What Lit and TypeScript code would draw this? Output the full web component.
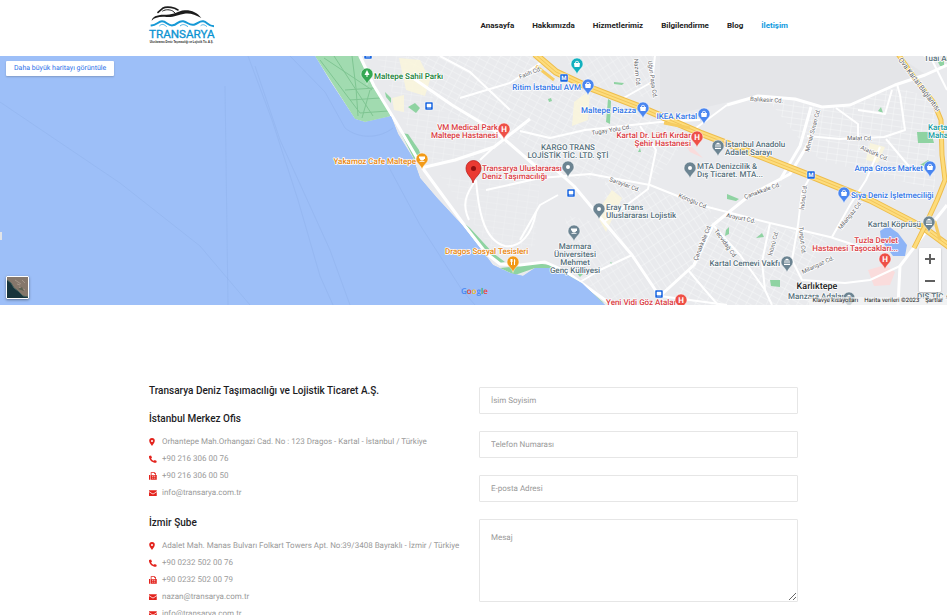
import { LitElement, html, svg, css } from "lit";
import { customElement } from "lit/decorators.js";

type Kind = "park" | "shop" | "food" | "health" | "place" | "teal";
type Anchor = "start" | "middle" | "end";

interface Label {
  x: number;
  y: number;
  lines: string[];
  kind: Kind | "town";
  anchor: Anchor;
}

const LABELS: Label[] = [
  { x: 374, y: 79, lines: ["Maltepe Sahil Parkı"], kind: "park", anchor: "start" },
  { x: 581, y: 90, lines: ["Ritim İstanbul AVM"], kind: "shop", anchor: "end" },
  { x: 636, y: 113, lines: ["Maltepe Piazza"], kind: "shop", anchor: "end" },
  { x: 697, y: 119, lines: ["IKEA Kartal"], kind: "shop", anchor: "end" },
  { x: 498, y: 130, lines: ["VM Medical Park", "Maltepe Hastanesi"], kind: "health", anchor: "end" },
  { x: 691, y: 138, lines: ["Kartal Dr. Lütfi Kırdar", "Şehir Hastanesi"], kind: "health", anchor: "end" },
  { x: 725, y: 147, lines: ["İstanbul Anadolu", "Adalet Sarayı"], kind: "place", anchor: "start" },
  { x: 568, y: 150, lines: ["KARGO TRANS", "LOJİSTİK TİC. LTD. ŞTİ"], kind: "place", anchor: "middle" },
  { x: 697, y: 169, lines: ["MTA Denizcilik &", "Dış Ticaret. MTA..."], kind: "place", anchor: "start" },
  { x: 416, y: 164, lines: ["Yakamoz Cafe Maltepe"], kind: "food", anchor: "end" },
  { x: 482, y: 171, lines: ["Transarya Uluslararası", "Deniz Taşımacılığı"], kind: "health", anchor: "start" },
  { x: 923, y: 171, lines: ["Anpa Gross Market"], kind: "shop", anchor: "end" },
  { x: 851, y: 198, lines: ["Siya Deniz İşletmeciliği"], kind: "shop", anchor: "start" },
  { x: 606, y: 210, lines: ["Eray Trans", "Uluslararası Lojistik"], kind: "place", anchor: "start" },
  { x: 921, y: 227, lines: ["Kartal Köprüsü"], kind: "place", anchor: "end" },
  { x: 898, y: 243, lines: ["Tuzla Devlet", "Hastanesi Taşocakları..."], kind: "health", anchor: "end" },
  { x: 575, y: 249, lines: ["Marmara", "Üniversitesi", "Mehmet", "Genç Külliyesi"], kind: "place", anchor: "middle" },
  { x: 445, y: 254, lines: ["Dragos Sosyal Tesisleri"], kind: "food", anchor: "start" },
  { x: 780, y: 266, lines: ["Kartal Cemevi Vakfı"], kind: "place", anchor: "end" },
  { x: 817, y: 289, lines: ["Karlıktepe"], kind: "town", anchor: "middle" },
  { x: 788, y: 299, lines: ["Manzara Adalar"], kind: "place", anchor: "start" },
  { x: 606, y: 305, lines: ["Yeni Vidi Göz Atalar"], kind: "health", anchor: "start" },
  { x: 924, y: 61, lines: ["Tuai Am"], kind: "place", anchor: "start" },
  { x: 928, y: 130, lines: ["Kartal", "Mahal"], kind: "teal", anchor: "start" },
  { x: 917, y: 299, lines: ["DIŞ TİC A"], kind: "place", anchor: "start" },
];

interface Pin {
  x: number;
  y: number;
  kind: Kind;
  glyph: "dot" | "H" | "bag" | "cup" | "fork" | "tree" | "bank";
}

const PINS: Pin[] = [
  { x: 367, y: 74, kind: "park", glyph: "tree" },
  { x: 577, y: 64, kind: "teal", glyph: "bag" },
  { x: 588, y: 85, kind: "shop", glyph: "bag" },
  { x: 643, y: 108, kind: "shop", glyph: "bag" },
  { x: 704, y: 114, kind: "shop", glyph: "bag" },
  { x: 504, y: 129, kind: "health", glyph: "H" },
  { x: 697, y: 137, kind: "health", glyph: "H" },
  { x: 718, y: 146, kind: "place", glyph: "bank" },
  { x: 568, y: 167, kind: "place", glyph: "dot" },
  { x: 690, y: 168, kind: "place", glyph: "dot" },
  { x: 422, y: 159, kind: "food", glyph: "cup" },
  { x: 930, y: 167, kind: "shop", glyph: "bag" },
  { x: 844, y: 193, kind: "shop", glyph: "bag" },
  { x: 599, y: 209, kind: "place", glyph: "dot" },
  { x: 929, y: 222, kind: "place", glyph: "bank" },
  { x: 574, y: 231, kind: "place", glyph: "cup" },
  { x: 885, y: 259, kind: "health", glyph: "H" },
  { x: 513, y: 262, kind: "food", glyph: "fork" },
  { x: 787, y: 262, kind: "place", glyph: "bank" },
  { x: 681, y: 300, kind: "health", glyph: "H" },
  { x: 849, y: 298, kind: "place", glyph: "bank" },
];

const STREETS: [number, number, number, string][] = [
  [520, 79, -22, "Fatih Cd."],
  [592, 135, -9, "Tugay Yolu Cd."],
  [609, 181, 20, "Saraylar Cd."],
  [678, 197, 23, "Köroğlu Cd."],
  [697, 261, -68, "Çanakkale Cd."],
  [714, 231, 54, "Tecvidağ Cd."],
  [726, 217, 12, "Arayurt Cd."],
  [745, 199, -20, "Çanakkale Cd."],
  [750, 101, 3, "Balıkesir Cd."],
  [809, 152, -75, "Mimar Sinan Cd."],
  [847, 140, 1, "Malat Cd."],
  [860, 149, 24, "Atatürk Cd."],
  [841, 230, -52, "Milangaz Cd."],
  [803, 274, -25, "Milangaz Cd."],
  [804, 210, -83, "İnönü Cd."],
  [799, 227, 84, "Turgut Cd."],
  [772, 256, -75, "İnönü Cd."],
  [634, 59, 85, "Nazım Cd."],
  [648, 61, 82, "Uğur Paşa Cd."],
];

const STOPS: [number, number, string][] = [
  [368, 55, "▫"],
  [429, 106, "▫"],
  [564, 78, "M"],
  [571, 193, "▫"],
  [811, 175, "M"],
  [659, 294, "▫"],
];

const LAND =
  "M315 56 L330 81 L355 119 L365 122 L391 116 L398 134 L413 158 L420 178 L437 198 L463 226 L480 248 L493 265 L510 273 L523 276 L535 268 L550 268 L566 274 L582 283 L605 305 L947 305 L947 56 Z";

const HIGHWAY = "M535 54 L556 72 L588 87 L640 107 L700 133 L760 156 L811 176 L870 200 L924 228 L950 247";
const LINK_ROAD = "M898 54 L915 79 L934 103 L941 120 L942 155 L945 180 L937 200 L924 228 L914 248";

const ROADS_MAIN = [
  "M360 56 L374 86 L396 122 L424 170 L465 226 L486 253 L500 264 L520 265 L545 262 L565 271 L612 305",
  "M556 170 L574 186 L604 222 L632 255 L660 297",
  "M660 296 L694 265 L713 225 L750 195 L790 174 L811 139",
  "M421 168 L455 160 L494 147 L530 119",
  "M410 76 L452 105 L495 131 L540 170",
  "M727 105 L758 96 L795 99 L822 107 L850 105 L895 85 L925 75 L947 65",
  "M811 107 L800 146 L780 180",
  "M947 205 L928 229 L900 266 L898 305",
];

const ROADS_MINOR = [
  "M476 180 C465 195 462 205 469 220",
  "M476 180 C478 205 482 240 505 246 C520 248 532 235 536 212",
  "M460 98 L510 83 L545 60",
  "M540 178 L590 174 L650 185 L700 205 L770 223 L830 237 L870 250",
  "M440 56 L470 72 L510 110",
  "M520 131 L550 138 L585 130 L660 122 L700 120",
  "M588 86 L620 100 L652 82 L655 56",
  "M696 128 L727 105",
  "M604 222 L648 189 L656 150 L640 126",
  "M660 296 L727 305",
  "M688 270 L705 290 L718 305",
  "M713 225 L740 255 L765 290 L772 305",
  "M770 223 L762 262 L765 290",
  "M798 225 L802 192 L811 175",
  "M798 225 L792 260 L802 280 L845 283 L870 280 L900 266",
  "M832 237 L850 205 L866 180 L880 147",
  "M807 136 L840 139 L884 137 L905 130 L900 95 L897 84",
  "M836 108 L858 124 L858 137",
  "M858 110 L885 114 L892 90",
  "M886 139 L912 170",
  "M930 56 L947 90",
  "M520 240 L540 205 L558 195",
  "M480 160 L494 147",
  "M486 190 L540 178",
  "M632 255 L600 270 L580 282",
];

const GREENS = [
  "M371 90 L391 116 L388 112 Z",
  "M401 133 L408 134 L419 150 L421 156 L414 159 Z",
  "M385 92 L391 98 L391 103 L386 97 Z",
  "M408 107 L415 103 L420 108 L416 113 Z",
  "M608 99 L611 101 L610 124 L606 122 Z",
  "M917 132 L931 132 L934 143 L918 143 Z",
  "M920 165 L928 160 L932 163 L928 167 Z",
  "M464 223 L470 228 L493 253 L505 262 L500 263 L486 252 Z",
  "M520 266 L535 263 L550 265 L570 274 L604 303 L595 300 L565 275 L535 268 L515 275 L500 268 Z",
  "M770 280 L780 280 L780 287 L771 286 Z",
  "M727 194 L739 199 L736 201 L727 199 Z",
  "M756 238 L762 233 L764 237 Z",
  "M726 230 L729 227 L729 234 L725 236 Z",
  "M878 111 L881 107 L883 113 Z",
  "M638 152 L640 148 L641 152 Z",
  "M614 82 L624 83 L622 85 L614 84 Z",
  "M938 62 L944 60 L944 66 L940 66 Z",
  "M576 272 L583 274 L580 277 Z",
  "M610 262 L615 264 L611 264 Z",
  "M548 99 L551 98 L552 101 L549 102 Z",
];

@customElement("site-logo")
class SiteLogo extends LitElement {
  static styles = css`
    :host {
      display: block;
      height: 56px;
    }
    .art {
      display: block;
      width: 67px;
      height: 56px;
      overflow: visible;
    }
    .name {
      font: 400 35px Roboto, sans-serif;
      fill: #0b93d2;
      stroke: #0b93d2;
    }
    .tag {
      font: 700 8px "Liberation Sans", sans-serif;
      fill: #222;
    }
  `;
  render() {
    return html`<svg class="art" viewBox="27 0 201 168" role="img" aria-label="Transarya">
      <g fill="none" stroke="#1c1c1c" stroke-linecap="round" stroke-linejoin="round">
        <path d="M54 37 L68 25 C78 19 92 21 104 25 L114 30" stroke-width="5" />
        <path d="M68 33 C78 27 90 29 98 33 L104 38" stroke-width="3" />
      </g>
      <path d="M35 62 C36 50 52 43 76 44 C104 45 112 33 134 31 C154 30 172 38 184 54 C166 43 148 38 133 41 C112 44 104 52 80 51 C60 49 44 52 35 62 Z" fill="#1c1c1c" />
      <path d="M32 76 C48 78 54 64 66 64 C80 64 84 78 98 76 C112 74 115 61 130 64 C144 67 148 77 162 74 C174 71 178 62 190 64 C202 66 204 78 222 79" fill="none" stroke="#1699d6" stroke-width="6" />
      <path d="M58 78 C66 70 72 73 80 80 M120 78 C130 70 136 75 144 80 M182 77 C190 71 196 76 201 80" fill="none" stroke="#4bb4e4" stroke-width="3" />
      <text class="name" x="27" y="114">TRANSARYA</text>
      <text class="tag" x="29" y="129">Uluslararası Deniz Taşımacılığı ve Lojistik Tic. A.Ş.</text>
    </svg>`;
  }
}

@customElement("office-map")
class OfficeMap extends LitElement {
  static styles = css`
    :host {
      display: block;
      position: relative;
      height: 249px;
      overflow: hidden;
      background: #9dbff8;
      font-family: Roboto, sans-serif;
      text-rendering: geometricPrecision;
    }
    .canvas {
      display: block;
      width: 100%;
      height: 100%;
    }
    text {
      paint-order: stroke;
      stroke: #fff;
      stroke-width: 1.5px;
      stroke-linejoin: round;
    }
    .label {
      font-size: 8px;
      font-weight: 500;
    }
    .street {
      font-size: 6px;
      fill: #5f6368;
    }
    .wide { font-size: 7px; }
    .park { fill: #188038; }
    .shop { fill: #2f74e6; }
    .food { fill: #e8850c; }
    .health { fill: #d93a3f; }
    .place { fill: #546e7a; }
    .teal { fill: #129aa3; }
    .town { fill: #222; font-size: 9px; }
    .pin { stroke: #fff; stroke-width: 0.5px; }
    .pin.park { fill: #34a853; }
    .pin.shop { fill: #4a86f0; }
    .pin.food { fill: #f29a18; }
    .pin.health { fill: #ee5047; }
    .pin.place { fill: #6c8492; }
    .pin.teal { fill: #12b0be; }
    .glyph { fill: #fff; }
    .letter {
      font-size: 8px;
      font-weight: 700;
      fill: #fff;
      stroke: none;
    }
    .stop {
      font-size: 6px;
      font-weight: 700;
      fill: #fff;
      stroke: none;
    }
    .google {
      font: 600 8px "Open Sans", sans-serif;
      stroke: none;
    }
    .larger {
      position: absolute;
      top: 5px;
      left: 6px;
      padding: 0 8px;
      border-radius: 1px;
      background: #fff;
      box-shadow: 0 1px 2px #0003;
      font-size: 7px;
      line-height: 15px;
      color: #2b70e8;
      text-decoration: none;
    }
    .satellite {
      position: absolute;
      left: 6px;
      bottom: 6px;
      width: 23px;
      height: 23px;
      padding: 0;
      border: 1px solid #fff;
      border-radius: 1px;
      background: #17343c;
      box-shadow: 0 1px 3px #0006;
    }
    .satellite svg { display: block; }
    .zoom {
      position: absolute;
      right: 6px;
      bottom: 13px;
      width: 22px;
      display: grid;
      border-radius: 1px;
      background: #fff;
      box-shadow: 0 1px 2px #0004;
    }
    .zoom button {
      height: 22px;
      padding: 0;
      border: 0;
      background: none;
      display: grid;
      place-items: center;
    }
    .credits {
      position: absolute;
      right: 0;
      bottom: 0;
      display: flex;
      gap: 6px;
      padding: 0 4px;
      background: #f5f5f5b0;
      font-size: 6px;
      line-height: 8px;
      color: #222;
    }
    .credits a {
      color: inherit;
      text-decoration: none;
    }
  `;

  private glyph(p: Pin) {
    switch (p.glyph) {
      case "H":
        return svg`<text class="letter" x="0" y="3" text-anchor="middle">H</text>`;
      case "bag":
        return svg`<path class="glyph" d="M-3 -1 H3 L2.5 3 H-2.5 Z M-1.8 -1 C-1.8 -4 1.8 -4 1.8 -1 H1 C1 -3 -1 -3 -1 -1 Z" />`;
      case "cup":
        return svg`<path class="glyph" d="M-3 -2.5 H3 V0 H2 C2 2 -2 2 -2 0 L-3 -1 Z M-2.5 2 H2.5 V2.8 H-2.5 Z" />`;
      case "fork":
        return svg`<path class="glyph" d="M-2.5 -3 H-0.5 V0 L-1 0 V3 H-2 V0 H-2.5 Z M1 -3 C2.5 -3 2.5 0 2 0 V3 H1 Z" />`;
      case "tree":
        return svg`<path class="glyph" d="M0 -4 L2.5 1 H0.5 V3 H-0.5 V1 H-2.5 Z" />`;
      case "bank":
        return svg`<path class="glyph" d="M0 -3.5 L3 -1.5 H-3 Z M-2.5 -1 H-1.5 V1.5 H-2.5 Z M-0.5 -1 H0.5 V1.5 H-0.5 Z M1.5 -1 H2.5 V1.5 H1.5 Z M-3 2 H3 V3 H-3 Z" />`;
      default:
        return svg`<circle class="glyph" r="2" />`;
    }
  }

  render() {
    return html`
      <svg class="canvas" viewBox="0 56 947 249" preserveAspectRatio="xMidYMid slice" role="img" aria-label="Harita">
        <defs>
          <pattern id="gridA" width="9" height="6" patternUnits="userSpaceOnUse" patternTransform="rotate(28)">
            <path d="M0 0 H9 M0 0 V6" stroke="#fafbfb" stroke-width="1" fill="none" />
          </pattern>
          <pattern id="gridB" width="6" height="11" patternUnits="userSpaceOnUse" patternTransform="rotate(-33)">
            <path d="M0 0 H6 M0 0 V11" stroke="#fafbfb" stroke-width="1" fill="none" />
          </pattern>
          <pattern id="gridC" width="10" height="6" patternUnits="userSpaceOnUse" patternTransform="rotate(8)">
            <path d="M0 0 H10 M0 0 V6" stroke="#fafbfb" stroke-width="1" fill="none" />
          </pattern>
          <clipPath id="land"><path d=${LAND} /></clipPath>
        </defs>
        <rect y="56" width="947" height="249" fill="#9dbff8" />
        <g fill="none" stroke="#8caee9" stroke-width="1" opacity="0.4">
          <path d="M0 102 L120 183 L200 246 L250 305 M225 86 L228 305 M248 56 L272 120 L298 200 L320 276 L333 305 M255 66 L280 140 L330 250 L350 305" />
          <path d="M290 56 L325 92 L345 128 C360 140 380 138 393 128 M385 160 L420 225 L462 290 L475 305" />
        </g>
        <rect y="232" width="2" height="8" fill="#e2e4e8" />
        <g clip-path="url(#land)">
          <path d=${LAND} fill="#e9eaed" />
          <path d="M405 56 H538 L565 80 L690 135 L655 180 L540 178 L520 140 L440 110 Z" fill="url(#gridA)" opacity="0.7" />
          <path d="M376 56 H410 L440 110 L515 140 L475 158 L425 168 Z" fill="url(#gridC)" opacity="0.5" />
          <path d="M560 56 H655 V100 L588 84 Z" fill="url(#gridB)" opacity="0.6" />
          <path d="M605 180 L713 205 L694 265 L660 296 L604 222 Z" fill="url(#gridB)" opacity="0.8" />
          <path d="M565 215 L604 224 L656 297 L612 303 L570 270 Z" fill="url(#gridB)" opacity="0.6" />
          <path d="M715 215 L830 238 L800 280 L830 305 H670 Z" fill="url(#gridA)" opacity="0.8" />
          <path d="M770 102 L895 86 L935 100 V190 L820 160 L800 140 Z" fill="url(#gridC)" opacity="0.8" />
          <path d="M440 175 L540 178 L535 245 L500 262 Z" fill="url(#gridC)" opacity="0.35" />
          <path d="M660 56 H898 L925 74 L850 104 L822 106 L795 98 L758 95 L660 118 Z" fill="#e4e5e8" />
          <path d="M399 58 L420 60 L430 80 L425 96 L406 90 Z M392 98 L404 95 L404 112 L394 110 Z M574 102 L590 90 L588 120 L572 126 Z M612 190 L622 198 L606 232 L596 214 Z M870 143 L885 147 L878 163 L866 160 Z" fill="#fbf6da" opacity="0.8" />
          <path d="M315 56 H358 L373 86 L391 112 L389 119 L365 122 L355 119 Z" fill="#a1dbb0" />
          <path d="M320 60 L360 113 L388 111 M334 56 L373 116 M345 90 L374 88 M350 100 L380 98 M352 56 L356 88 L358 116 M370 90 L362 118 M324 58 L372 90" fill="none" stroke="#7fc592" stroke-width="1" />
          ${GREENS.map((d) => svg`<path d=${d} fill="#8fd3a2" />`)}
          <path d="M880 231 L888 226 L898 233 L907 245 L905 256 L893 256 L881 240 Z" fill="#8db4f7" />
          <path d="M868 270 L885 265 L895 272 L890 285 L874 286 Z M680 138 L690 145 L703 158 L690 152 Z" fill="#fadcdc" />
          ${ROADS_MINOR.map((d) => svg`<path d=${d} fill="none" stroke="#fff" stroke-width="2" stroke-linejoin="round" />`)}
          ${ROADS_MAIN.map((d) => svg`<path d=${d} fill="none" stroke="#fff" stroke-width="3" stroke-linejoin="round" />`)}
        </g>
        <g fill="none" stroke-linejoin="round">
          <path d=${HIGHWAY} stroke="#eebd4c" stroke-width="7" />
          <path d=${HIGHWAY} stroke="#fddc7c" stroke-width="5" />
          <path d=${HIGHWAY} stroke="#f2c55a" stroke-width="1" />
          <path d=${LINK_ROAD} stroke="#eebd4c" stroke-width="5" />
          <path d=${LINK_ROAD} stroke="#fddc7c" stroke-width="3" />
          <path d="M914 226 L935 222 L940 240 M536 66 L554 80 M664 123 L690 128" stroke="#f6cc62" stroke-width="3" />
        </g>
        ${STREETS.map(([x, y, r, t]) => svg`<text class="street" x=${x} y=${y} transform="rotate(${r} ${x} ${y})">${t}</text>`)}
        <text class="street wide" x="898" y="60" transform="rotate(53 898 60)">Ova Kartal Bağlantısı</text>
        ${STOPS.map(
          ([x, y, t]) => svg`<rect x=${x - 4} y=${y - 4} width="8" height="8" rx="1" fill="#1a66e0" stroke="#fff" stroke-width="0.5" />
          ${t === "M" ? svg`<text class="stop" x=${x} y=${y + 2} text-anchor="middle">M</text>` : svg`<path d=${`M${x - 2} ${y - 2} h4 v3 h-4 z M${x - 2} ${y + 2} h4`} fill="#fff" stroke="#fff" stroke-width="0.5" />`}`
        )}
        ${LABELS.map((l) =>
          l.lines.map(
            (t, i) => svg`<text class="label ${l.kind}" x=${l.x} y=${l.y + i * 8} text-anchor=${l.anchor}>${t}</text>`
          )
        )}
        ${PINS.map(
          (p) => svg`<g transform="translate(${p.x} ${p.y})">
            <path class="pin ${p.kind}" d="M0 10.500 C-1 6 -6 4 -6 0 A6 6 0 0 1 6 0 C6 4 1 6 0 10.500 Z" />
            ${this.glyph(p)}
          </g>`
        )}
        <path d="M473 183 C472 177 466 175 466 168 A7.500 7.500 0 0 1 481 168 C481 175 474 177 473 183 Z" fill="#ea3a32" stroke="#b41412" stroke-width="0.7" />
        <circle cx="473.500" cy="168.500" r="2.500" fill="#8f1010" />
        <text class="google" x="461" y="294"><tspan fill="#4285f4">G</tspan><tspan fill="#ea4335">o</tspan><tspan fill="#f5c022">o</tspan><tspan fill="#4285f4">g</tspan><tspan fill="#34a853">l</tspan><tspan fill="#ea4335">e</tspan></text>
      </svg>
      <a class="larger" href="#harita">Daha büyük haritayı görüntüle</a>
      <button class="satellite" aria-label="Uydu görüntüsü">
        <svg width="21" height="21" viewBox="0 0 21 21">
          <path d="M0 0 H21 V20 L16 19 L11 14 L7 11 L4 6 L0 3 Z" fill="#85776b" />
          <path d="M0 3 L4 6 L7 11 L11 14 L16 19 L21 20" fill="none" stroke="#43605c" />
          <path d="M8 3 L14 7 M12 10 L18 13 M15 3 L18 6 M10 7 L13 8" stroke="#a4968a" />
          <path d="M11 12 L15 10 L17 14 Z" fill="#5b6152" />
        </svg>
      </button>
      <div class="zoom">
        <button aria-label="Yakınlaştır"><svg width="12" height="12"><path d="M1 6 H11 M6 1 V11" stroke="#606060" stroke-width="2" /></svg></button>
        <button aria-label="Uzaklaştır"><svg width="12" height="12"><path d="M1 6 H11" stroke="#606060" stroke-width="2" /></svg></button>
      </div>
      <div class="credits"><span>Klavye kısayolları</span><span>Harita verileri ©2023</span><a href="#sartlar">Şartlar</a></div>
    `;
  }
}

type IconName = "pin" | "phone" | "fax" | "mail";

const ICONS: Record<IconName, string> = {
  pin: "M6 0 A5.500 5.500 0 0 0 0.500 6 C0.500 10 4 12 6 16 C8 12 11.500 10 11.500 6 A5.500 5.500 0 0 0 6 0 Z M6 4 A2 2 0 1 1 6 8 A2 2 0 1 1 6 4 Z",
  phone: "M0 2 L4 1 L6 5 L4.300 6.800 C5 9 7.500 11 9.800 11.500 L11.500 9.800 L15.500 12 L14.500 15.500 C7 16.500 -1 9.500 0 2 Z",
  fax: "M0 6 H2.500 V15.500 H0 Z M3.500 0.500 H11.500 L14 3 V6 H15.500 V15.500 H3.500 Z M5 2 V6.500 H12.500 V4 H10.500 V2 Z M6.500 8.500 V10 H8.500 V8.500 Z M10.500 8.500 V10 H12.500 V8.500 Z M6.500 11.500 V13 H8.500 V11.500 Z M10.500 11.500 V13 H12.500 V11.500 Z",
  mail: "M0 2.500 H15.500 V4.500 L8 9.500 L0 4.500 Z M0 6 L8 11.200 L15.500 6 V14 H0 Z",
};

interface Office {
  title: string;
  rows: [IconName, string, string?][];
}

const OFFICES: Office[] = [
  {
    title: "İstanbul Merkez Ofis",
    rows: [
      ["pin", "Orhantepe Mah.Orhangazi Cad. No : 123 Dragos - Kartal - İstanbul / Türkiye"],
      ["phone", "+90 216 306 00 76", "tel:+902163060076"],
      ["fax", "+90 216 306 00 50"],
      ["mail", "info@transarya.com.tr", "mailto:info@transarya.com.tr"],
    ],
  },
  {
    title: "İzmir Şube",
    rows: [
      ["pin", "Adalet Mah. Manas Bulvarı Folkart Towers Apt. No:39/3408 Bayraklı - İzmir / Türkiye"],
      ["phone", "+90 0232 502 00 76", "tel:+902325020076"],
      ["fax", "+90 0232 502 00 79"],
      ["mail", "nazan@transarya.com.tr", "mailto:nazan@transarya.com.tr"],
      ["mail", "info@transarya.com.tr", "mailto:info@transarya.com.tr"],
    ],
  },
];

@customElement("app-root")
class AppRoot extends LitElement {
  static styles = css`
    :host {
      display: block;
      background: #fff;
      font-family: Roboto, sans-serif;
      font-size: 8px;
      color: #222;
    }
    .wrap {
      max-width: 649px;
      margin: 0 auto;
    }
    .bar {
      display: flex;
      align-items: center;
      justify-content: space-between;
      height: 56px;
    }
    .menu {
      display: flex;
      gap: 18px;
      padding-right: 10px;
      font-weight: 700;
      line-height: 12px;
      margin-bottom: 4px;
    }
    .menu a {
      color: #222;
      text-decoration: none;
    }
    .menu .current {
      color: #0f9ae0;
    }
    .contact {
      display: grid;
      grid-template-columns: 1fr 1fr;
      gap: 11px;
      padding-top: 72px;
    }
    .title {
      margin: 0;
      font-size: 10px;
      font-weight: 500;
      line-height: 28px;
      color: #1d1d1f;
    }
    .list {
      list-style: none;
      margin: 0 0 8px;
      padding: 0;
      color: #999;
      text-rendering: geometricPrecision;
    }
    .list:last-child {
      margin: 0;
    }
    .row {
      display: flex;
      align-items: center;
      gap: 5px;
      height: 17px;
      white-space: nowrap;
    }
    .row a {
      color: inherit;
      text-decoration: none;
    }
    .icon {
      width: 8px;
      height: 8px;
      fill: #e3231d;
    }
    .form {
      display: grid;
      align-content: start;
      gap: 17px;
      padding-top: 10px;
    }
    .box {
      box-sizing: border-box;
      width: 100%;
      height: 27px;
      margin: 0;
      padding: 0 11px;
      border: 1px solid #e6e6e6;
      border-radius: 1px;
      background: #fff;
      font: 400 8px Roboto, sans-serif;
      text-rendering: geometricPrecision;
      color: #444;
    }
    .box::placeholder {
      color: #999;
      opacity: 1;
    }
    .area {
      height: 83px;
      padding: 12px 11px;
      line-height: 12px;
      resize: vertical;
    }
  `;

  render() {
    const menu = ["Anasayfa", "Hakkımızda", "Hizmetlerimiz", "Bilgilendirme", "Blog", "İletişim"];
    const fields: [string, string, string][] = [
      ["name", "text", "İsim Soyisim"],
      ["phone", "tel", "Telefon Numarası"],
      ["email", "email", "E-posta Adresi"],
    ];
    return html`
      <header class="wrap bar">
        <site-logo></site-logo>
        <nav class="menu">
          ${menu.map((m) => html`<a href="#" class=${m === "İletişim" ? "current" : ""}>${m}</a>`)}
        </nav>
      </header>
      <office-map></office-map>
      <main class="wrap contact">
        <section>
          <h1 class="title">Transarya Deniz Taşımacılığı ve Lojistik Ticaret A.Ş.</h1>
          ${OFFICES.map(
            (o) => html`<h2 class="title">${o.title}</h2>
              <ul class="list">
                ${o.rows.map(
                  ([icon, text, link]) => html`<li class="row">
                    <svg class="icon" viewBox="0 0 16 16" aria-hidden="true"><path fill-rule="evenodd" d=${ICONS[icon]} /></svg>
                    ${link ? html`<a href=${link}>${text}</a>` : html`<span>${text}</span>`}
                  </li>`
                )}
              </ul>`
          )}
        </section>
        <form class="form">
          ${fields.map(
            ([name, type, label]) =>
              html`<input class="box" name=${name} type=${type} placeholder=${label} aria-label=${label} />`
          )}
          <textarea class="box area" name="message" placeholder="Mesaj" aria-label="Mesaj"></textarea>
        </form>
      </main>
    `;
  }
}
